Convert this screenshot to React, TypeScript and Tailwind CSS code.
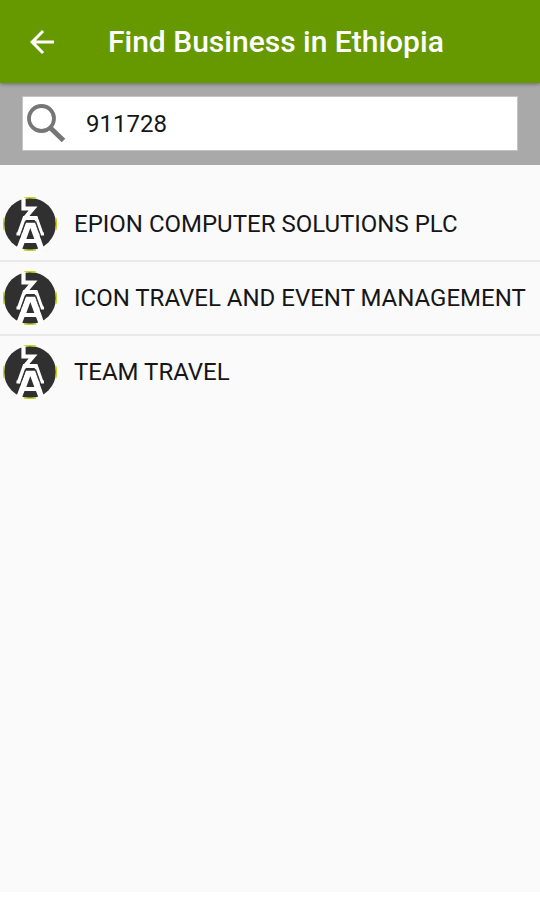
import { useState } from "react";

const businesses = [
  "EPION COMPUTER SOLUTIONS PLC",
  "ICON TRAVEL AND EVENT MANAGEMENT",
  "TEAM TRAVEL",
];

function BackIcon() {
  return (
    <svg viewBox="0 0 24 24" className="size-9" fill="currentColor" aria-hidden="true">
      <path d="M20 11H7.83l5.59-5.59L12 4l-8 8 8 8 1.41-1.41L7.83 13H20v-2z" />
    </svg>
  );
}

function SearchIcon() {
  return (
    <svg viewBox="0 0 40 40" className="size-10 shrink-0" fill="none" stroke="#767676" aria-hidden="true">
      <circle cx="14.5" cy="14.5" r="12.5" strokeWidth="3.8" />
      <path d="M23.5 24L36.5 36.5" strokeWidth="5" />
    </svg>
  );
}

function Logo() {
  return (
    <svg viewBox="0 0 54 54" className="size-[54px] shrink-0" aria-hidden="true">
      <circle cx="27" cy="27" r="26" fill="#303030" />
      <g fill="none" stroke="#c3d21c" strokeWidth="1.6">
        <path d="M1.3 21A26.4 26.4 0 0 0 1.3 33" />
        <path d="M52.7 21A26.4 26.4 0 0 1 52.7 33" />
        <path d="M21 1.3A26.4 26.4 0 0 1 33 1.3" />
        <path d="M21 52.7A26.4 26.4 0 0 0 33 52.7" />
      </g>
      <g fill="none" stroke="#fff">
        <path d="M20.5 1V11.5H30L22 21" strokeWidth="4.2" />
        <path d="M15.5 38L21.5 21H33L39 38" strokeWidth="3.8" />
        <path d="M13.5 37H19.5M34.5 37H41" strokeWidth="3" />
      </g>
      <path
        d="M23 25.5H32L41.5 52.5H35.5L33 46H21.5L19 52.5H13ZM27.3 31L23.3 42H31.3Z"
        fill="#fff"
        fillRule="evenodd"
      />
      <path d="M16.8 40.5L22.3 24.8H32.7L38.2 40.5" fill="none" stroke="#303030" strokeWidth="1.2" />
    </svg>
  );
}

export default function App() {
  const [query, setQuery] = useState("911728");

  return (
    <div className="flex min-h-screen flex-col border-b-8 border-white bg-[#fafafa] font-[Roboto,sans-serif] text-[#161616]">
      <header className="relative flex h-[83px] items-center bg-[#669900] pl-6 text-white shadow-[0_1px_4px_rgba(0,0,0,0.4)]">
        <button type="button" aria-label="Back" className="size-9">
          <BackIcon />
        </button>
        <h1 className="ml-12 text-3xl font-medium">Find Business in Ethiopia</h1>
      </header>

      <div className="bg-[#a9a9a9] px-[22px] pt-[13px] pb-[14px]">
        <label className="flex h-[55px] items-center border border-[#c4c4c4] bg-white pl-1">
          <SearchIcon />
          <input
            type="text"
            aria-label="Search businesses"
            value={query}
            onChange={(event) => setQuery(event.target.value)}
            className="ml-[19px] min-w-0 flex-1 bg-transparent text-2xl outline-none"
          />
        </label>
      </div>

      <ul className="mt-[23px] divide-y-2 divide-[#e9e9e9]">
        {businesses.map((name) => (
          <li key={name}>
            <a href="#" className="flex h-[72px] items-center gap-[17px] pl-[3px] text-2xl">
              <Logo />
              <span className="whitespace-nowrap">{name}</span>
            </a>
          </li>
        ))}
      </ul>
    </div>
  );
}
